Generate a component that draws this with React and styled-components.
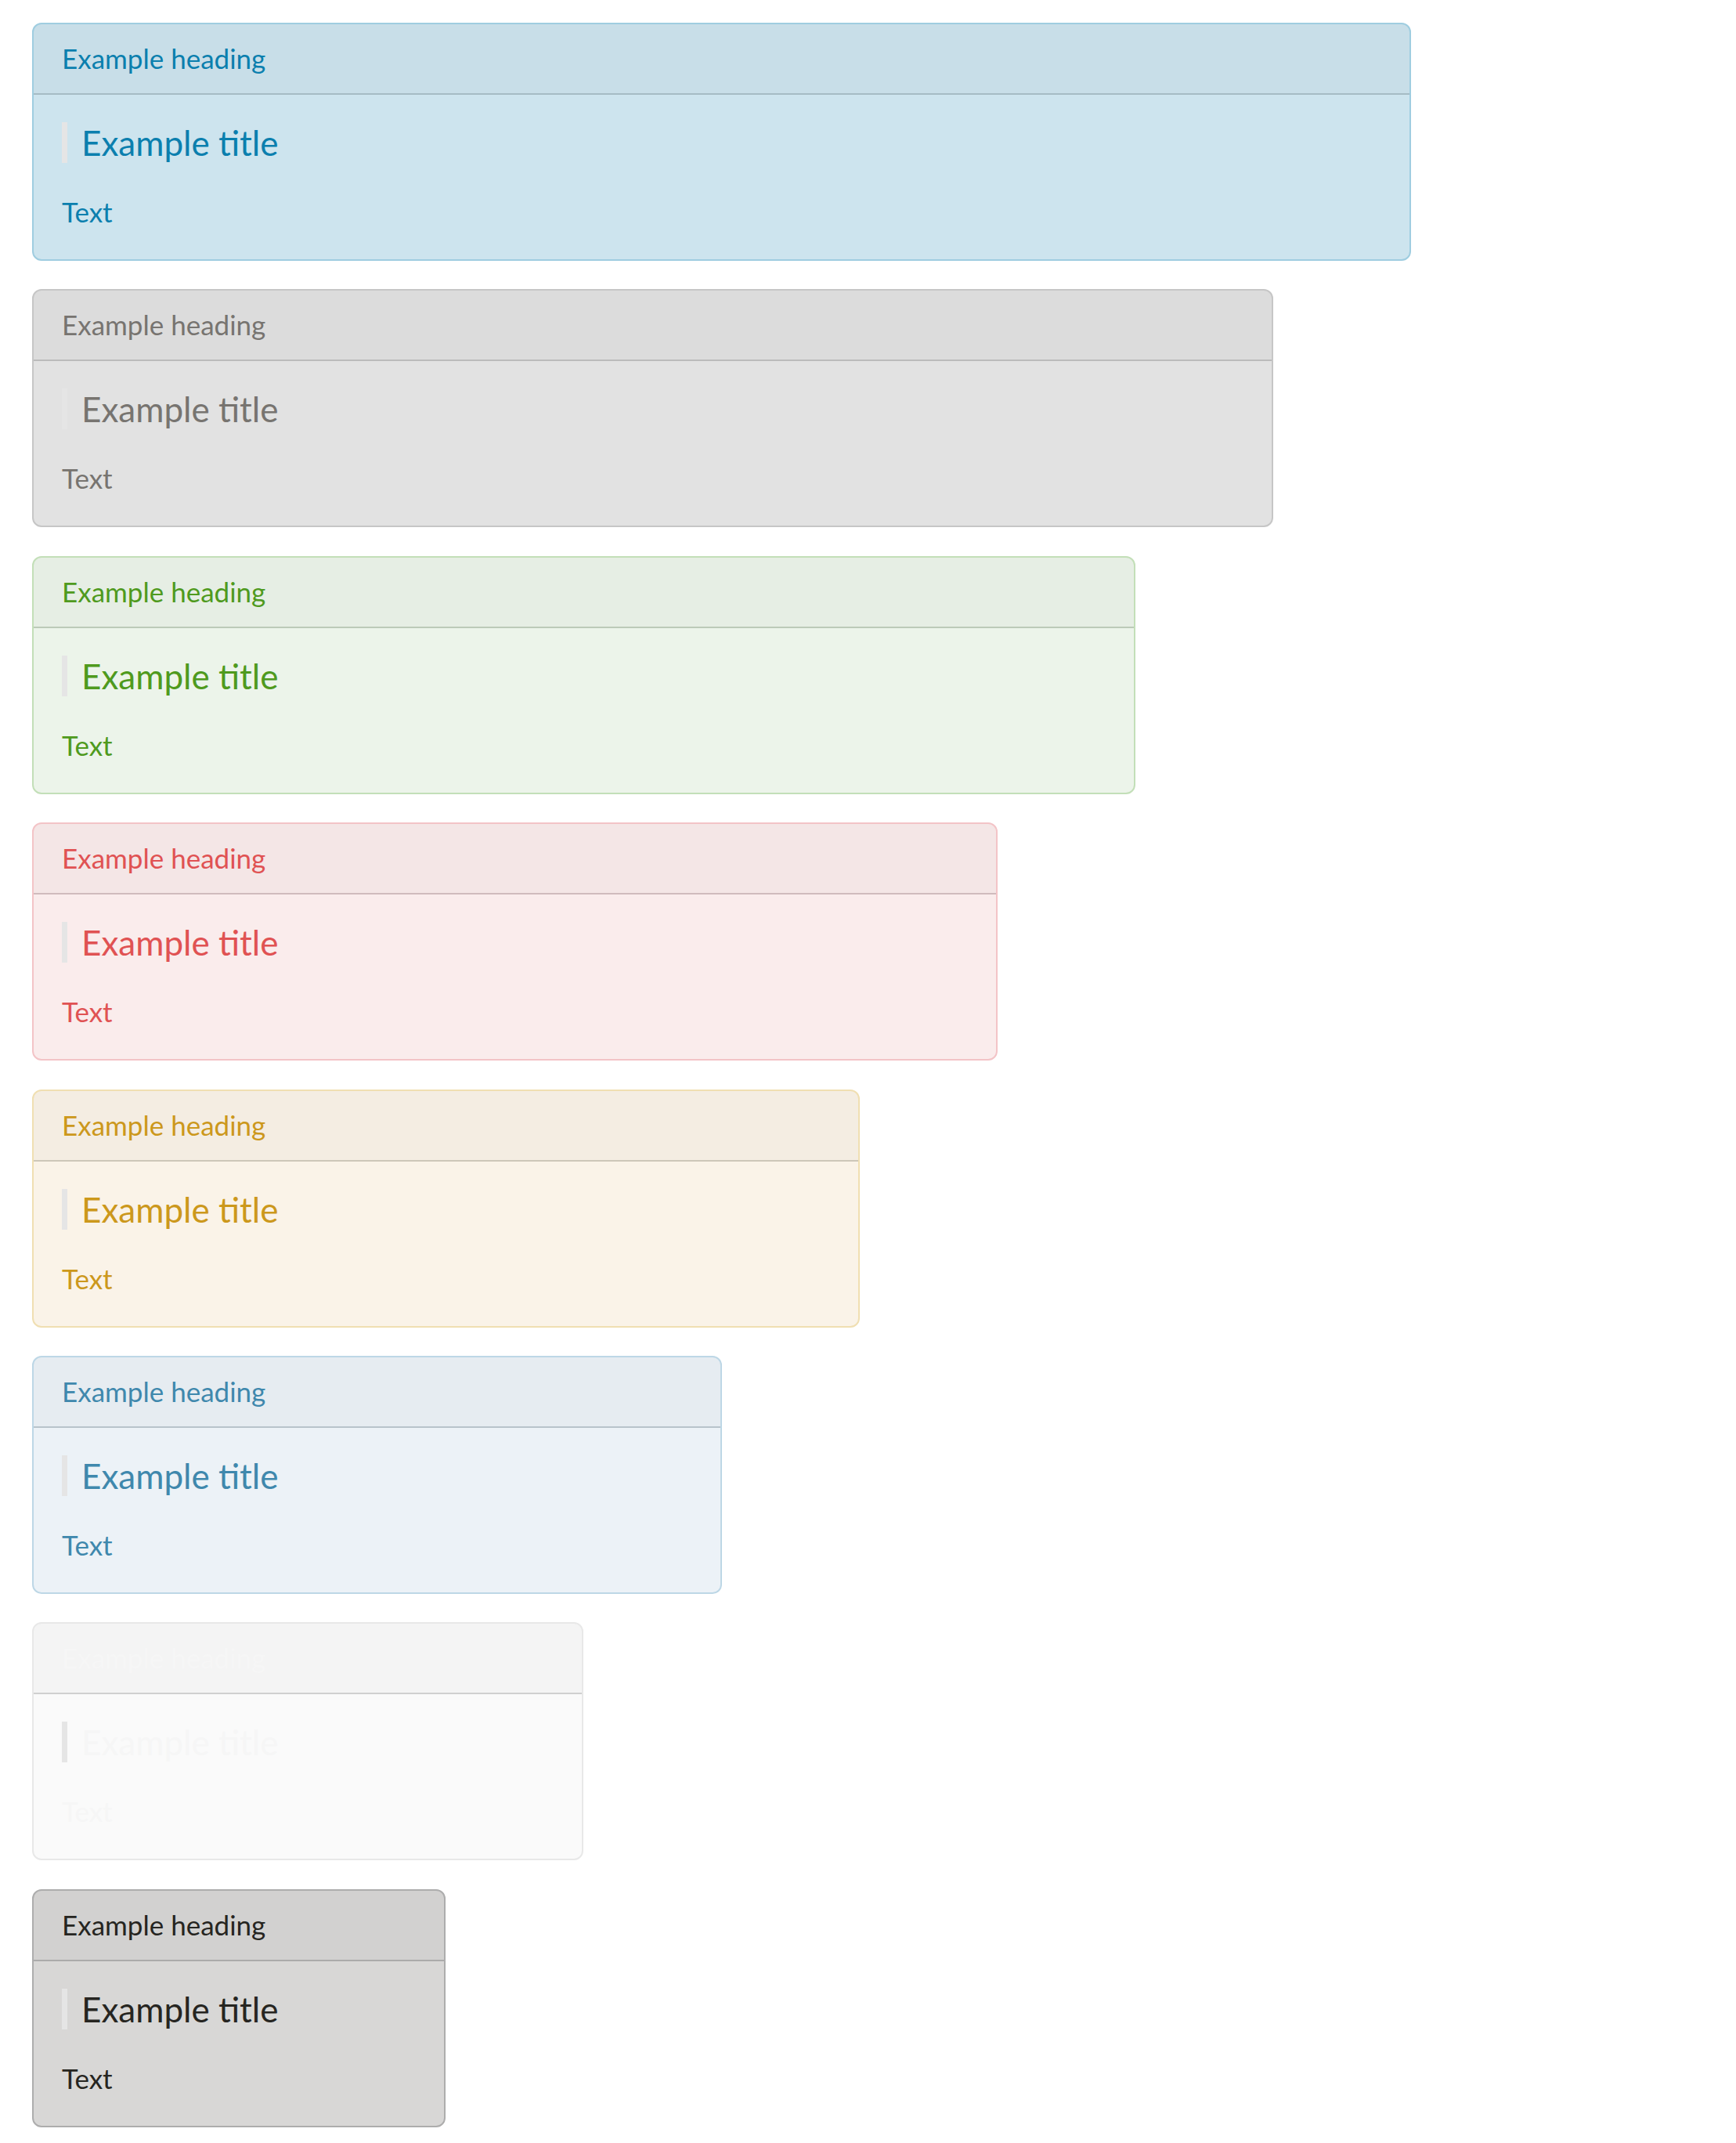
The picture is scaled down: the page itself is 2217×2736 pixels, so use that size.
import React from 'react';
import styled, { createGlobalStyle } from 'styled-components';

const GlobalStyle = createGlobalStyle`
  html, body {
    margin: 0;
    padding: 0;
    background: #ffffff;
  }
  body {
    font-family: Lato, "Open Sans", "Liberation Sans", sans-serif;
  }
`;

const variants = {
  info: { bg: '#cde4ee', border: '#9fcde0', divider: '#a6bcc4', color: '#0b7fae' },
  muted: { bg: '#e2e2e2', border: '#c6c6c6', divider: '#bbbbbb', color: '#777470' },
  success: { bg: '#ecf4ea', border: '#c3dfb8', divider: '#bccab8', color: '#4f9a1e' },
  danger: { bg: '#faecec', border: '#f3c4c7', divider: '#d0bbbd', color: '#e05253' },
  warning: { bg: '#faf3e8', border: '#f0dfb2', divider: '#cdc7b9', color: '#cc981c' },
  primary: { bg: '#ecf2f7', border: '#bdd7e6', divider: '#b8c3cb', color: '#3f88ad' },
  light: { bg: '#fafafa', border: '#e8e8e8', divider: '#cfcfcf', color: '#f6f6f6' },
  dark: { bg: '#d8d7d6', border: '#adadad', divider: '#ababab', color: '#262521' },
};

const order = ['info', 'muted', 'success', 'danger', 'warning', 'primary', 'light', 'dark'];

const Page = styled.div`
  width: 1761px;
  margin-left: 41px;
  padding: 29px 0 20px;
  display: flex;
  flex-direction: column;
  gap: 36.4px;
`;

const Card = styled.div`
  box-sizing: border-box;
  width: ${p => p.$width}%;
  border: 2px solid ${p => p.$v.border};
  border-radius: 12px;
  background: ${p => p.$v.bg};
  color: ${p => p.$v.color};
  overflow: hidden;
`;

const Header = styled.div`
  padding: 23px 36px 24px;
  font-size: 35px;
  line-height: 41px;
  background: rgba(0, 0, 0, 0.025);
  border-bottom: 2px solid ${p => p.$v.divider};
`;

const Body = styled.div`
  padding: 35px 36px 40px;
  display: flex;
  flex-direction: column;
  gap: 42px;
`;

const Title = styled.h3`
  margin: 0;
  padding-left: 18px;
  border-left: 7px solid #e5e5e5;
  font-weight: 400;
  font-size: 44px;
  line-height: 52px;
`;

const Text = styled.p`
  margin: 0;
  font-size: 35px;
  line-height: 41px;
`;

function Panel({ variant, width }) {
  const v = variants[variant];
  return (
    <Card $v={v} $width={width}>
      <Header $v={v}>Example heading</Header>
      <Body>
        <Title>Example title</Title>
        <Text>Text</Text>
      </Body>
    </Card>
  );
}

export default function App() {
  return (
    <>
      <GlobalStyle />
      <Page>
        {order.map((name, i) => (
          <Panel key={name} variant={name} width={100 - i * 10} />
        ))}
      </Page>
    </>
  );
}
